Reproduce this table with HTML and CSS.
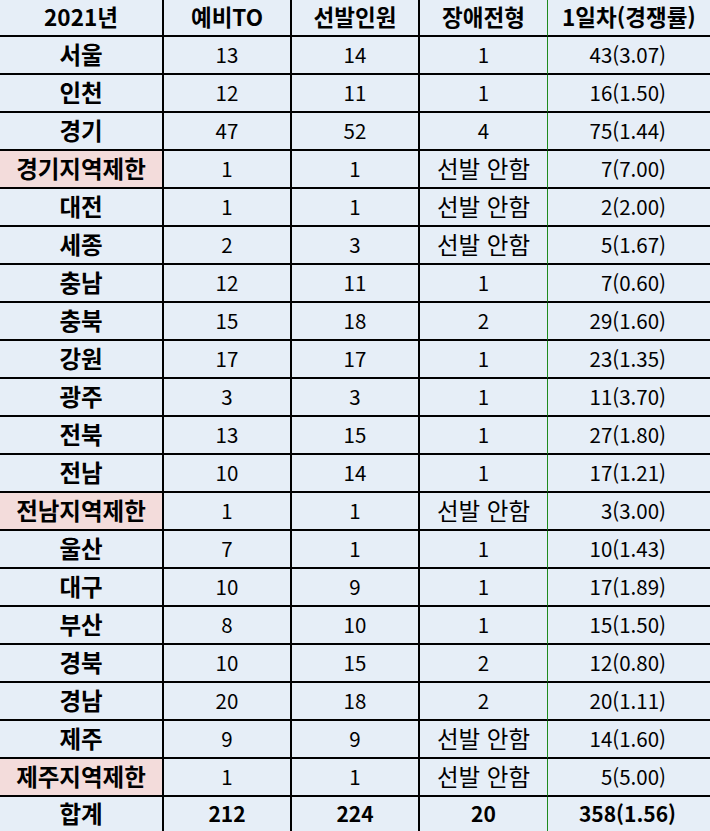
FILE: index.html
```html
<!DOCTYPE html>
<html lang="ko">
<head>
<meta charset="utf-8">
<title>2021년 예비TO</title>
<link rel="stylesheet" href="styles.css">
</head>
<body>
<div class="sheet">
  <div class="c h c1">2021년</div><div class="c h">예비TO</div><div class="c h">선발인원</div><div class="c h c4">장애전형</div><div class="c h c5">1일차(경쟁률)</div>

  <div class="c c1 k b">서울</div><div class="c">13</div><div class="c">14</div><div class="c c4">1</div><div class="c c5 r">43(3.07)</div>
  <div class="c c1 k b">인천</div><div class="c">12</div><div class="c">11</div><div class="c c4">1</div><div class="c c5 r">16(1.50)</div>
  <div class="c c1 k b">경기</div><div class="c">47</div><div class="c">52</div><div class="c c4">4</div><div class="c c5 r">75(1.44)</div>
  <div class="c c1 k b pink">경기지역제한</div><div class="c">1</div><div class="c">1</div><div class="c c4 k">선발 안함</div><div class="c c5 r">7(7.00)</div>
  <div class="c c1 k b">대전</div><div class="c">1</div><div class="c">1</div><div class="c c4 k">선발 안함</div><div class="c c5 r">2(2.00)</div>
  <div class="c c1 k b">세종</div><div class="c">2</div><div class="c">3</div><div class="c c4 k">선발 안함</div><div class="c c5 r">5(1.67)</div>
  <div class="c c1 k b">충남</div><div class="c">12</div><div class="c">11</div><div class="c c4">1</div><div class="c c5 r">7(0.60)</div>
  <div class="c c1 k b">충북</div><div class="c">15</div><div class="c">18</div><div class="c c4">2</div><div class="c c5 r">29(1.60)</div>
  <div class="c c1 k b">강원</div><div class="c">17</div><div class="c">17</div><div class="c c4">1</div><div class="c c5 r">23(1.35)</div>
  <div class="c c1 k b">광주</div><div class="c">3</div><div class="c">3</div><div class="c c4">1</div><div class="c c5 r">11(3.70)</div>
  <div class="c c1 k b">전북</div><div class="c">13</div><div class="c">15</div><div class="c c4">1</div><div class="c c5 r">27(1.80)</div>
  <div class="c c1 k b">전남</div><div class="c">10</div><div class="c">14</div><div class="c c4">1</div><div class="c c5 r">17(1.21)</div>
  <div class="c c1 k b pink">전남지역제한</div><div class="c">1</div><div class="c">1</div><div class="c c4 k">선발 안함</div><div class="c c5 r">3(3.00)</div>
  <div class="c c1 k b">울산</div><div class="c">7</div><div class="c">1</div><div class="c c4">1</div><div class="c c5 r">10(1.43)</div>
  <div class="c c1 k b">대구</div><div class="c">10</div><div class="c">9</div><div class="c c4">1</div><div class="c c5 r">17(1.89)</div>
  <div class="c c1 k b">부산</div><div class="c">8</div><div class="c">10</div><div class="c c4">1</div><div class="c c5 r">15(1.50)</div>
  <div class="c c1 k b">경북</div><div class="c">10</div><div class="c">15</div><div class="c c4">2</div><div class="c c5 r">12(0.80)</div>
  <div class="c c1 k b">경남</div><div class="c">20</div><div class="c">18</div><div class="c c4">2</div><div class="c c5 r">20(1.11)</div>
  <div class="c c1 k b">제주</div><div class="c">9</div><div class="c">9</div><div class="c c4 k">선발 안함</div><div class="c c5 r">14(1.60)</div>
  <div class="c c1 k b pink">제주지역제한</div><div class="c">1</div><div class="c">1</div><div class="c c4 k">선발 안함</div><div class="c c5 r">5(5.00)</div>

  <div class="c c1 k b last">합계</div><div class="c t last">212</div><div class="c t last">224</div><div class="c c4 t last">20</div><div class="c c5 t last rt">358(1.56)</div>
</div>
</body>
</html>
```

FILE: styles.css
```css
html, body {
  margin: 0;
  padding: 0;
  overflow: hidden;
  background: #e6eef7;
}

.sheet {
  display: grid;
  grid-template-columns: 164px 128px 128px 128px 162px;
  grid-template-rows: 37px repeat(20, 38px) 34px;
  width: 710px;
  font-family: "Noto Sans CJK KR", "Noto Sans", sans-serif;
  font-size: 20.5px;
  color: #000;
  background: #e6eef7;
}

.c {
  box-sizing: border-box;
  display: flex;
  align-items: center;
  justify-content: center;
  border-right: 2px solid #000;
  border-bottom: 2px solid #000;
  white-space: nowrap;
  line-height: 1;
  padding-bottom: 1px;
}

.h {
  font-weight: 700;
  font-size: 22.5px;
  padding-bottom: 2px;
}

.k {
  font-size: 23.5px;
}

.b {
  font-weight: 700;
}

.t {
  font-weight: 700;
  font-size: 21px;
}

.c4 {
  border-right: 1px solid #1e8a1e;
}

.c5 {
  border-right: none;
}

.r {
  justify-content: flex-end;
  padding-right: 44px;
}

.rt {
  justify-content: flex-end;
  padding-right: 34px;
}

.pink {
  background: #f3dcdb;
}

.last {
  border-bottom: none;
}
```
